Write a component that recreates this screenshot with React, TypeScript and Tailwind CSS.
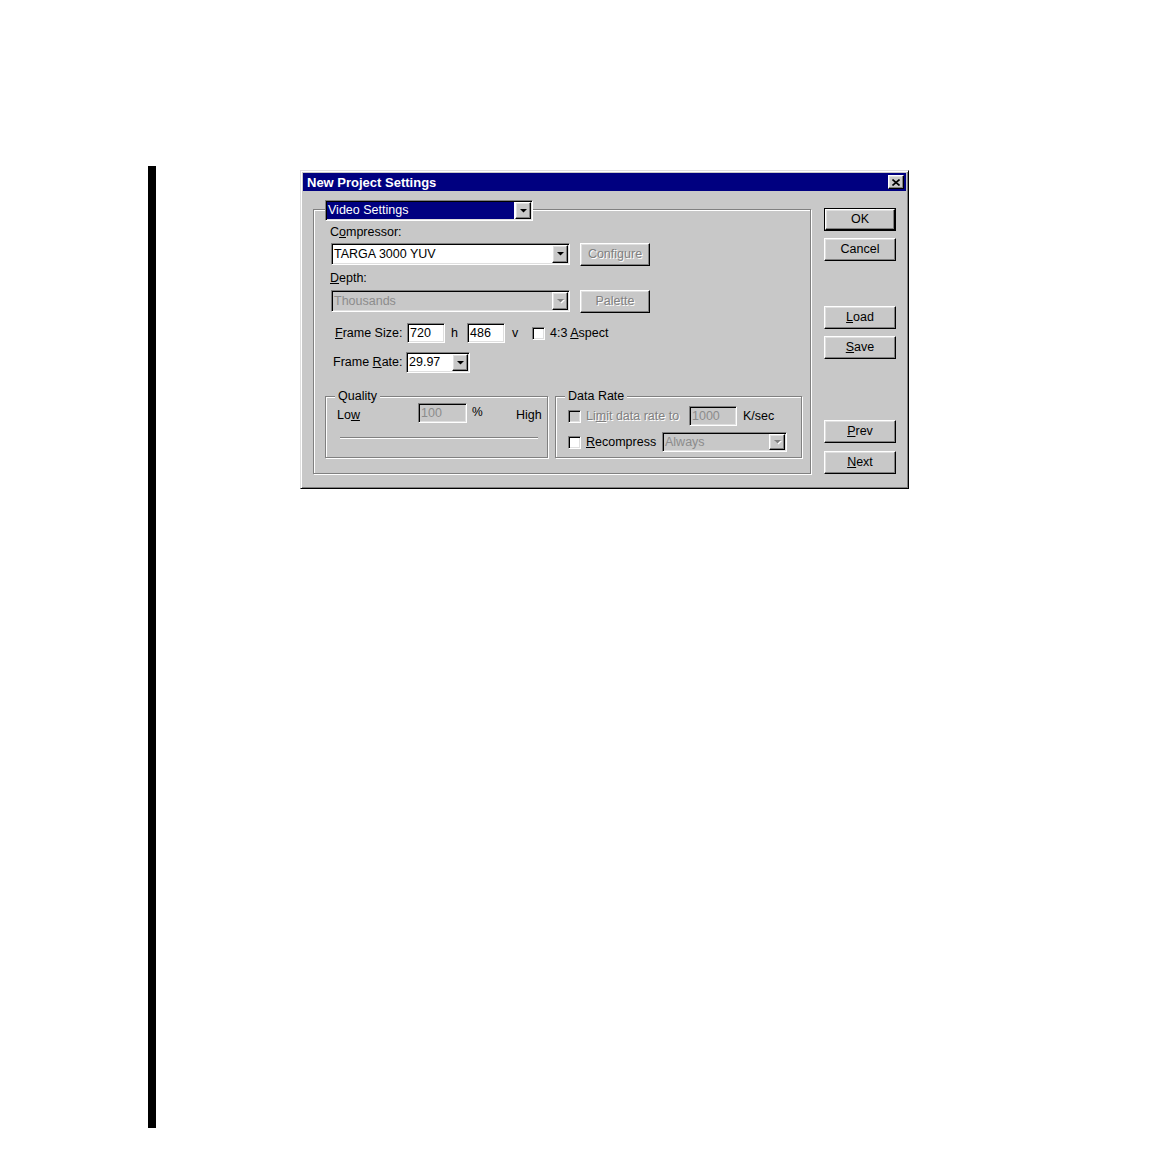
import React from "react";

const raised =
  "border border-t-white border-l-white border-r-black border-b-black shadow-[inset_-1px_-1px_0_#808080,inset_1px_1px_0_#dfdfdf]";
const sunken =
  "border border-t-[#808080] border-l-[#808080] border-r-white border-b-white shadow-[inset_1px_1px_0_#000,inset_-1px_-1px_0_#dfdfdf]";
const etched = "border border-[#808080] shadow-[1px_1px_0_#fff,inset_1px_1px_0_#fff]";
const dis = "text-[#808080] [text-shadow:1px_1px_0_#fff]";
const gray = "bg-[#c8c8c8]";

function Arrow({ disabled = false }: { disabled?: boolean }) {
  return (
    <div className={`w-[16px] h-full shrink-0 ${gray} flex items-center justify-center ${raised}`}>
      <svg width="9" height="6" viewBox="0 0 9 6">
        {disabled && <path d="M2 2h7L5.5 5.5z" fill="#fff" />}
        <path d="M1 1h7L4.5 4.5z" fill={disabled ? "#808080" : "#000"} />
      </svg>
    </div>
  );
}

function Combo({
  className,
  text,
  disabled = false,
}: {
  className: string;
  text: string;
  disabled?: boolean;
}) {
  return (
    <div className={`flex shrink-0 p-[1px] ${sunken} ${disabled ? gray : "bg-white"} ${className}`}>
      <div
        className={`flex-1 flex items-center pl-[1px] leading-none whitespace-nowrap overflow-hidden ${
          disabled ? "text-[#8c8c8c]" : "text-black"
        }`}
      >
        {text}
      </div>
      <Arrow disabled={disabled} />
    </div>
  );
}

function Field({ className, text, disabled = false }: { className: string; text: string; disabled?: boolean }) {
  return (
    <div
      className={`flex items-center shrink-0 pl-[2px] leading-none ${sunken} ${
        disabled ? `${gray} text-[#8c8c8c]` : "bg-white text-black"
      } ${className}`}
    >
      {text}
    </div>
  );
}

function Check({ disabled = false }: { disabled?: boolean }) {
  return <div className={`w-[13px] h-[13px] shrink-0 ${sunken} ${disabled ? gray : "bg-white"}`} />;
}

function Btn({
  children,
  className = "",
  disabled = false,
}: {
  children: React.ReactNode;
  className?: string;
  disabled?: boolean;
}) {
  return (
    <div
      className={`flex items-center justify-center shrink-0 leading-none ${gray} ${raised} ${
        disabled ? dis : "text-black"
      } ${className}`}
    >
      {children}
    </div>
  );
}

export default function App() {
  return (
    <div className="w-[1152px] h-[1152px] bg-white flex items-start pl-[148px] pt-[166px] font-['Liberation_Sans',Arial,sans-serif] text-[12.5px] text-black">
      <div className="w-[8px] h-[962px] bg-black shrink-0" />

      {/* Dialog */}
      <div
        className={`ml-[144px] mt-[4px] w-[609px] h-[319px] ${gray} p-[2px] border border-t-[#dfdfdf] border-l-[#dfdfdf] border-r-black border-b-black shadow-[inset_1px_1px_0_#fff,inset_-1px_-1px_0_#808080]`}
      >
        {/* Title bar */}
        <div className="h-[18px] bg-[#000080] flex items-center justify-between pl-[4px] pr-[2px]">
          <span className="text-white font-bold text-[13px] leading-none">New Project Settings</span>
          <div className={`w-[16px] h-[14px] ${gray} ${raised} flex items-center justify-center`}>
            <svg width="8" height="7" viewBox="0 0 8 7">
              <path d="M0.5 0.5L7.5 6.5M7.5 0.5L0.5 6.5" stroke="#000" strokeWidth="1.6" />
            </svg>
          </div>
        </div>

        {/* Body */}
        <div className="flex items-start pl-[10px] pt-[18px]">
          {/* Main group */}
          <div className={`relative w-[498px] h-[265px] shrink-0 ${etched} pl-[16px] pt-[14px] flex flex-col`}>
            <div
              className={`absolute left-[11px] top-[-10px] w-[208px] h-[21px] flex p-[1px] bg-white ${sunken}`}
            >
              <div className="flex-1 mr-[1px] bg-[#000080] text-white flex items-center pl-[1px] leading-none">
                Video Settings
              </div>
              <Arrow />
            </div>

            <div className="h-[16px] leading-[16px]">
              C<u>o</u>mpressor:
            </div>
            <div className="mt-[3px] flex items-start h-[23px]">
              <Combo className="ml-[1px] w-[239px] h-[22px]" text="TARGA 3000 YUV" />
              <Btn className="ml-[10px] w-[70px] h-[23px]" disabled>
                Configure
              </Btn>
            </div>

            <div className="mt-[4px] h-[16px] leading-[16px]">
              <u>D</u>epth:
            </div>
            <div className="mt-[4px] flex items-start h-[23px]">
              <Combo className="ml-[1px] w-[239px] h-[22px]" text="Thousands" disabled />
              <Btn className="ml-[10px] w-[70px] h-[23px]" disabled>
                Palette
              </Btn>
            </div>

            {/* Frame size */}
            <div className="mt-[10px] ml-[5px] flex items-center h-[20px]">
              <span className="w-[72px] shrink-0">
                <u>F</u>rame Size:
              </span>
              <Field className="w-[38px] h-[20px]" text="720" />
              <span className="w-[22px] pl-[6px] shrink-0">h</span>
              <Field className="w-[38px] h-[20px]" text="486" />
              <span className="w-[27px] pl-[7px] shrink-0">v</span>
              <Check />
              <span className="ml-[5px]">
                4:3 <u>A</u>spect
              </span>
            </div>

            {/* Frame rate */}
            <div className="mt-[9px] ml-[3px] flex items-center h-[21px]">
              <span className="w-[73px] shrink-0">
                Frame <u>R</u>ate:
              </span>
              <Combo className="w-[64px] h-[21px]" text="29.97" />
            </div>

            {/* Quality / Data rate */}
            <div className="mt-[23px] -ml-[5px] flex items-start gap-[7px]">
              <div className={`relative w-[223px] h-[62px] shrink-0 ${etched} flex flex-col`}>
                <span className={`absolute left-[9px] top-[-9px] px-[3px] ${gray} leading-[16px]`}>Quality</span>
                <div className="mt-[6px] flex items-start h-[20px]">
                  <span className="ml-[11px] w-[81px] shrink-0 mt-[4px] leading-[16px]">
                    Lo<u>w</u>
                  </span>
                  <Field className="w-[49px] h-[20px]" text="100" disabled />
                  <span className="w-[49px] pl-[5px] shrink-0 mt-[1px] leading-[16px] text-[12px]">%</span>
                  <span className="mt-[4px] leading-[16px]">High</span>
                </div>
                <div className="mt-[14px] ml-[14px] w-[198px] h-[2px] border-t border-t-[#808080] border-b border-b-white" />
              </div>

              <div className={`relative w-[247px] h-[62px] shrink-0 ${etched} flex flex-col`}>
                <span className={`absolute left-[9px] top-[-9px] px-[3px] ${gray} leading-[16px]`}>Data Rate</span>
                <div className="mt-[9px] flex items-center h-[20px]">
                  <div className="ml-[12px]">
                    <Check disabled />
                  </div>
                  <span className={`ml-[5px] w-[103px] shrink-0 whitespace-nowrap ${dis}`}>
                    Li<u>m</u>it data rate to
                  </span>
                  <Field className="w-[48px] h-[20px]" text="1000" disabled />
                  <span className="ml-[6px]">K/sec</span>
                </div>
                <div className="mt-[6px] flex items-center h-[20px]">
                  <div className="ml-[12px]">
                    <Check />
                  </div>
                  <span className="ml-[5px] w-[76px] shrink-0">
                    <u>R</u>ecompress
                  </span>
                  <Combo className="w-[125px] h-[20px]" text="Always" disabled />
                </div>
              </div>
            </div>
          </div>

          {/* Right buttons */}
          <div className="ml-[13px] -mt-[1px] flex flex-col w-[72px]">
            <div className="w-[72px] h-[23px] border border-black">
              <Btn className="w-full h-full">OK</Btn>
            </div>
            <Btn className="mt-[7px] w-[72px] h-[23px]">Cancel</Btn>
            <Btn className="mt-[45px] w-[72px] h-[23px]">
              <span>
                <u>L</u>oad
              </span>
            </Btn>
            <Btn className="mt-[7px] w-[72px] h-[23px]">
              <span>
                <u>S</u>ave
              </span>
            </Btn>
            <Btn className="mt-[61px] w-[72px] h-[23px]">
              <span>
                <u>P</u>rev
              </span>
            </Btn>
            <Btn className="mt-[8px] w-[72px] h-[23px]">
              <span>
                <u>N</u>ext
              </span>
            </Btn>
          </div>
        </div>
      </div>
    </div>
  );
}
